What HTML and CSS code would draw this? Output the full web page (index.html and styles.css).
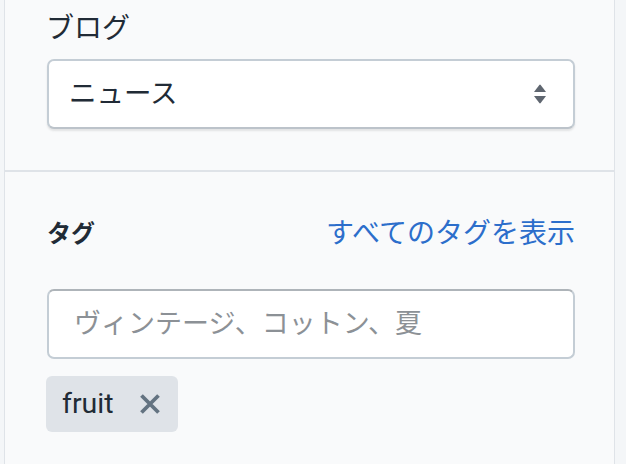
FILE: index.html
```html
<!DOCTYPE html>
<html lang="ja">
<head>
<meta charset="utf-8">
<link rel="stylesheet" href="styles.css">
</head>
<body>
<div class="card">
  <section class="section section-blog">
    <div class="label">ブログ</div>
    <div class="select">
      <span class="select-value">ニュース</span>
      <svg class="select-arrows" width="14" height="20" viewBox="0 0 14 20">
        <path d="M1 8 L6.3 1 Q7 0.2 7.7 1 L13 8 Z" fill="#5f6670"/>
        <path d="M1 12 L13 12 L7.7 19 Q7 19.8 6.3 19 Z" fill="#5f6670"/>
      </svg>
    </div>
  </section>
  <section class="section section-tags">
    <div class="tags-header">
      <span class="subheading">タグ</span>
      <a class="link" href="#">すべてのタグを表示</a>
    </div>
    <input class="text-field" type="text" placeholder="ヴィンテージ、コットン、夏">
    <div class="tag-list">
      <span class="tag">
        <span class="tag-text">fruit</span>
        <span class="tag-remove">
          <svg width="24" height="24" viewBox="0 0 24 24">
            <path d="M3.5 3.5 L20.5 20.5 M20.5 3.5 L3.5 20.5" stroke="#637381" stroke-width="3.8" fill="none"/>
          </svg>
        </span>
      </span>
    </div>
  </section>
</div>
</body>
</html>
```
FILE: styles.css
```css
html, body {
  margin: 0;
  padding: 0;
}
body {
  background: #f4f6f8;
  font-family: Roboto, "Noto Sans CJK JP", sans-serif;
  color: #212b36;
  height: 464px;
  overflow: hidden;
}
.card {
  margin-left: 4px;
  width: 611px;
  box-sizing: border-box;
  min-height: 464px;
  background: #f9fafb;
  border-left: 1px solid #dfe3e8;
  border-right: 1px solid #dfe3e8;
}
.section {
  padding-left: 42px;
  padding-right: 39px;
}
.section-blog {
  padding-top: 9px;
  padding-bottom: 41px;
}
.label {
  font-size: 28px;
  line-height: 40px;
  margin-bottom: 10px;
  margin-left: -1px;
}
.select {
  height: 70px;
  box-sizing: border-box;
  background: #fff;
  border: 2px solid #c4cdd5;
  border-bottom-color: #bcc3ca;
  border-radius: 7px;
  box-shadow: 0 2px 2px rgba(63, 63, 68, 0.12);
  display: flex;
  align-items: center;
  justify-content: space-between;
  padding: 0 26px 0 20px;
}
.select-value {
  font-size: 27.5px;
  line-height: 40px;
}
.select-arrows {
  display: block;
}
.section-tags {
  border-top: 2px solid #dfe3e8;
  padding-top: 40px;
}
.tags-header {
  height: 44px;
  display: flex;
  align-items: center;
  justify-content: space-between;
  margin-bottom: 33px;
}
.subheading {
  font-size: 24px;
  font-weight: 700;
  line-height: 44px;
}
.link {
  font-size: 28px;
  line-height: 44px;
  color: #2c6ecb;
  text-decoration: none;
}
.text-field {
  display: block;
  width: 100%;
  height: 70px;
  box-sizing: border-box;
  margin: 0;
  border: 2px solid #c4cdd5;
  border-top-color: #aeb4b9;
  border-radius: 7px;
  background: #fff;
  padding: 0 24px 0 25px;
  font-family: Roboto, "Noto Sans CJK JP", sans-serif;
  font-size: 27px;
  color: #212b36;
  outline: none;
}
.text-field::placeholder {
  color: #8c9196;
}
.tag-list {
  margin-top: 17px;
  display: flex;
  margin-left: -1px;
}
.tag {
  display: inline-flex;
  align-items: center;
  height: 56px;
  background: #dfe3e8;
  border-radius: 6px;
  padding-left: 16px;
}
.tag-text {
  font-size: 28.5px;
  line-height: 40px;
  margin-right: 8px;
}
.tag-remove {
  width: 56px;
  height: 56px;
  display: flex;
  align-items: center;
  justify-content: center;
}
.tag-remove svg {
  display: block;
}
```
